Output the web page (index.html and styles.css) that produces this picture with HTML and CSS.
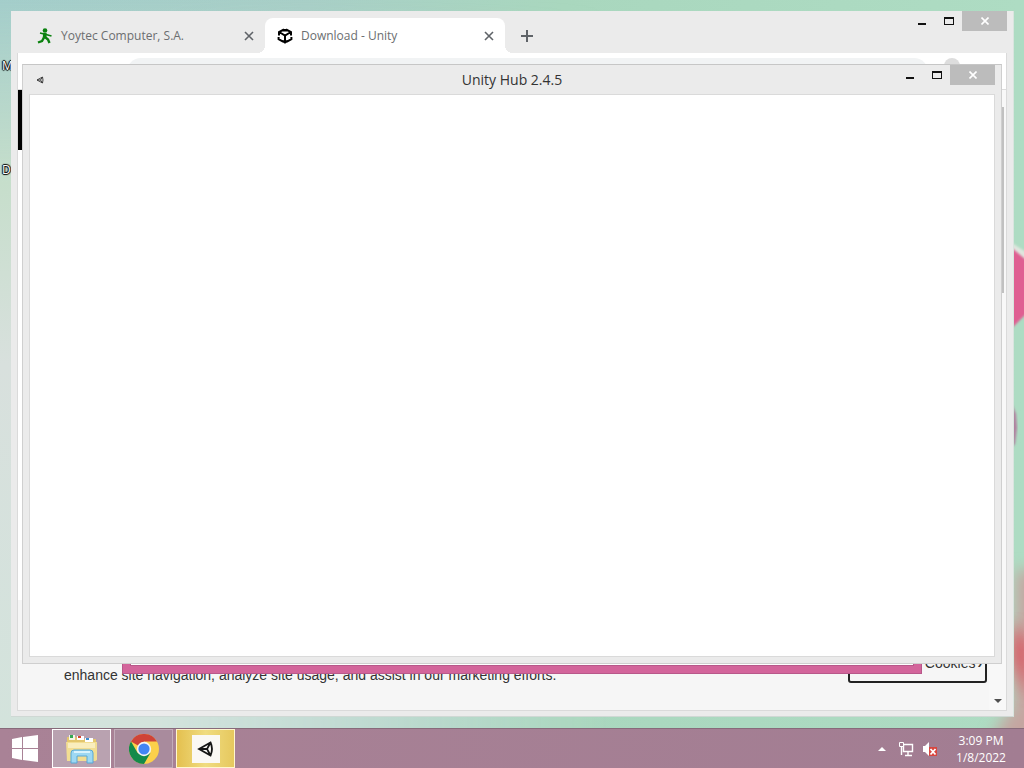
FILE: index.html
```html
<!DOCTYPE html>
<html lang="en">
<head>
<meta charset="utf-8">
<title>Desktop</title>
<link rel="stylesheet" href="styles.css">
</head>
<body>
<div class="desktop">
  <main class="workspace">
    <svg class="petals" width="84" height="728" viewBox="0 0 84 728" aria-hidden="true">
      <defs>
        <filter id="soft"><feGaussianBlur stdDeviation="1"/></filter>
        <filter id="softer" x="-1" width="3"><feGaussianBlur stdDeviation="8"/></filter>
      </defs>
      <path d="M72 243l14 9v8l-14-6z" fill="#dfe6de" filter="url(#soft)"/>
      <path d="M72 248l14 12v54l-14 14z" fill="#df5f92" filter="url(#soft)"/>
      <path d="M72 404l4 10 1 14-2 16-4 4z" fill="#b0809f" filter="url(#soft)"/>
      <path d="M76 570h30v180H54v-16l20-30z" fill="#c5a5a0" filter="url(#softer)"/>
      <path d="M72 620l16 24v56l-16-40z" fill="#dc4f5c" filter="url(#softer)"/>
    </svg>
    <div class="shortcut shortcut-m">M</div>
    <div class="shortcut shortcut-d">D</div>

    <section class="window browser" aria-label="Browser">
      <header class="tabstrip">
        <div class="tab">
          <svg class="favicon" width="16" height="16" viewBox="0 0 16 16" fill="none" stroke="#0b820f"><circle cx="8" cy="2.500" r="2.300" fill="#0b820f" stroke="none"/><path d="M8 5L7.500 10" stroke-width="3.600"/><path d="M3 5L8 6.200L14.500 8" stroke-width="1.700"/><path d="M8 9L11 11.500L12.500 15M7 9.500L5 13L1 14.500" stroke-width="2.400"/></svg>
          <span class="tab-title">Yoytec Computer, S.A.</span>
          <button class="tab-close" aria-label="Close tab"><svg width="10" height="10" viewBox="0 0 10 10"><path d="M1 1l8 8M9 1l-8 8"/></svg></button>
        </div>
        <div class="tab tab-active">
          <svg class="favicon" width="16" height="16" viewBox="0 0 16 16" fill="none" stroke="#000" stroke-width="2"><path d="M7 1.300L2 4.200v3.300M9 1.300l5 2.900v3.300M1.600 9v2.200L6 13.700M14.400 9v2.200L10 13.700M3 4.500L8 7.500l5-3M8 7.500V14M5.500 12.800L8 14.500l2.500-1.700M7 1v2.500M9 1v2.500"/></svg>
          <span class="tab-title">Download - Unity</span>
          <button class="tab-close" aria-label="Close tab"><svg width="10" height="10" viewBox="0 0 10 10"><path d="M1 1l8 8M9 1l-8 8"/></svg></button>
        </div>
        <button class="new-tab" aria-label="New tab"><svg width="12" height="12" viewBox="0 0 12 12"><path d="M6 0v12M0 6h12"/></svg></button>
        <div class="controls">
          <button class="control" aria-label="Minimize"><svg width="10" height="10" viewBox="0 0 10 10"><path d="M1 7h8v2H1z"/></svg></button>
          <button class="control" aria-label="Maximize"><svg width="10" height="10" viewBox="0 0 10 10"><path d="M0 1h10v8H0zM1 3v5h8V3z" fill-rule="evenodd"/></svg></button>
          <button class="control control-close" aria-label="Close"><svg width="8" height="8" viewBox="0 0 8 8"><path d="M0.500 0.500l7 7M7.500 0.500l-7 7"/></svg></button>
        </div>
      </header>
      <div class="browser-client">
        <div class="toolbar"><div class="omnibox"></div><div class="avatar"></div></div>
        <div class="page">
          <div class="page-main">
            <div class="site-header"></div>
            <div class="cookie-banner">
              <p class="cookie-text">enhance site navigation, analyze site usage, and assist in our marketing efforts.</p>
              <button class="cookie-button">Cookies <b>›</b></button>
            </div>
          </div>
          <div class="scrollbar">
            <div class="thumb"></div>
            <svg width="8" height="4" viewBox="0 0 8 4"><path d="M0 0h8L4 4z" fill="#505050"/></svg>
          </div>
        </div>
      </div>
    </section>

    <div class="pink-window"><div class="pink-client"></div></div>

    <section class="window hub" aria-label="Unity Hub">
      <header class="titlebar">
        <svg class="hub-icon" width="8" height="8" viewBox="0 0 8 8"><path d="M1 4l5.500-3q1 3 0 6zM1 4h3.500M6.500 1l-2 3 2 3" fill="none" stroke="#333" stroke-width="0.900"/></svg>
        <h1 class="hub-title">Unity Hub 2.4.5</h1>
        <div class="controls">
          <button class="control" aria-label="Minimize"><svg width="10" height="10" viewBox="0 0 10 10"><path d="M1 7h8v2H1z"/></svg></button>
          <button class="control" aria-label="Maximize"><svg width="10" height="10" viewBox="0 0 10 10"><path d="M0 1h10v8H0zM1 3v5h8V3z" fill-rule="evenodd"/></svg></button>
          <button class="control control-close" aria-label="Close"><svg width="8" height="8" viewBox="0 0 8 8"><path d="M0.500 0.500l7 7M7.500 0.500l-7 7"/></svg></button>
        </div>
      </header>
      <div class="hub-client"></div>
    </section>
  </main>

  <footer class="taskbar">
    <button class="start" aria-label="Start"><svg width="28" height="28" viewBox="0 0 28 28" fill="#fff"><path d="M1 4l10-2v11H1zM12 2l15-2v13H12zM1 14h10v11L1 23zM12 14h15v13l-15-2z"/></svg></button>
    <button class="task task-open" aria-label="File Explorer">
      <svg width="34" height="32" viewBox="0 0 34 32"><path d="M2 4h9l2 2h18v22H2z" fill="#e3c66c"/><path d="M4 2h6v5H4z" fill="#f5f5e8"/><path d="M5 2h3v3H5z" fill="#35a853"/><path d="M12 3h7v4h-7z" fill="#fff"/><path d="M13 3h3v2h-3z" fill="#d8442f"/><path d="M20 5h8v4h-8z" fill="#fff"/><path d="M21 5h3v2h-3z" fill="#3b8fd0"/><path d="M1 9h31v18l-2 1H2z" fill="#f2dd92"/><path d="M3 10h27v5H3z" fill="#f9edbd"/><path d="M6 30V20q0-3 3-3h16q3 0 3 3v10h-6v-7H12v7z" fill="#9dd8f3" stroke="#58a8d4"/><path d="M9 19h16" stroke="#d9f3fd" stroke-width="2"/></svg>
    </button>
    <button class="task" aria-label="Chrome">
      <svg width="30" height="30" viewBox="0 0 30 30"><circle cx="15" cy="15" r="15" fill="#fbd04a"/><path d="M15 15L2 7.500A15 15 0 0 1 28 7.500H15z" fill="#cf4338"/><path d="M2 7.500A15 15 0 0 0 15 30l6.500-11.300L15 22 8.500 18.800z" fill="#138a4a"/><circle cx="15" cy="15" r="7.200" fill="#f4f4f4"/><circle cx="15" cy="15" r="5.600" fill="#4285f4"/></svg>
    </button>
    <button class="task task-active" aria-label="Unity Hub">
      <svg width="28" height="28" viewBox="0 0 28 28"><path d="M0 0h28v28H0z" fill="#faf8f4"/><path d="M7 14L18.500 7.500Q21.500 14 18.500 20.500zM7 14h8M18.500 7.500L15 14l3.500 6.500" fill="none" stroke="#161616" stroke-width="1.800"/></svg>
    </button>
    <div class="tray">
      <button class="tray-button" aria-label="Show hidden icons"><svg width="8" height="4" viewBox="0 0 8 4"><path d="M0 4h8L4 0z" fill="#fff"/></svg></button>
      <button class="tray-button" aria-label="Network"><svg width="16" height="16" viewBox="0 0 16 16"><path d="M5.500 3.500h9v7h-9zM10 11v3M7 14.500h7M3.500 5v9" fill="none" stroke="#fff" stroke-width="1.400"/><path d="M1.500 1.500h4v4h-4z" fill="#a07f91" stroke="#fff"/></svg></button>
      <button class="tray-button" aria-label="Volume muted"><svg width="16" height="16" viewBox="0 0 16 16"><path d="M1 5h2l4-4v14l-4-4H1z" fill="#fff"/><path d="M7 6h8v9H7z" fill="#d8463f"/><path d="M8.500 8l5 5.500M13.500 8l-5 5.500" stroke="#fff" stroke-width="1.800"/></svg></button>
      <div class="clock"><time>3:09 PM</time><time>1/8/2022</time></div>
    </div>
  </footer>
</div>
</body>
</html>
```
FILE: styles.css
```css
* { box-sizing: border-box; }

body {
  margin: 0;
  font-family: "Open Sans", "Noto Sans", sans-serif;
  font-size: 12px;
}

button {
  margin: 0;
  padding: 0;
  border: 0;
  background: none;
  font: inherit;
  display: flex;
  align-items: center;
  justify-content: center;
}

.desktop {
  display: flex;
  flex-direction: column;
  height: 100vh;
  overflow: hidden;
}

.workspace {
  position: relative;
  flex: 1;
  overflow: hidden;
  background: linear-gradient(90deg, #a4cecb 0, #a8cfc7 30%, #a9d7be 55%, #aedcc3 100%);
}

.workspace::before {
  content: "";
  position: absolute;
  inset: 0;
  background: linear-gradient(180deg, transparent 0, #c6decb 25%, #d8e0dd 50%, #d3e3dc 100%);
  mask-image: linear-gradient(90deg, #000 0, #000 15%, transparent 60%);
}

.petals { position: absolute; top: 0; right: 0; }

.shortcut {
  position: absolute;
  left: 2px;
  color: #fff;
  line-height: 16px;
  text-shadow: 1px 0 1px #000, -1px 0 1px #000, 0 1px 1px #000, 0 -1px 1px #000;
}
.shortcut-m { top: 58px; }
.shortcut-d { top: 162px; }

.window {
  position: absolute;
  display: flex;
  flex-direction: column;
  background: #ebebeb;
}

.browser {
  inset: 11px 10px 11px 11px;
  padding: 0 6px 5px;
  border-right: 1px solid #d9e5df;
  border-bottom: 1px solid #cfd8d4;
}

.tabstrip {
  display: flex;
  align-items: flex-end;
  height: 42px;
  flex: none;
}

.tab {
  display: flex;
  align-items: center;
  gap: 8px;
  width: 240px;
  height: 35px;
  padding: 0 10px 0 12px;
  color: #6b6e70;
}
.tab:first-child { margin-left: 8px; }
.tab-active {
  position: relative;
  background: #fff;
  border-radius: 8px 8px 0 0;
}
.tab-active::before,
.tab-active::after {
  content: "";
  position: absolute;
  bottom: 0;
  width: 8px;
  height: 8px;
}
.tab-active::before { right: 100%; background: radial-gradient(circle at 0 0, transparent 8px, #fff 8px); }
.tab-active::after { left: 100%; background: radial-gradient(circle at 100% 0, transparent 8px, #fff 8px); }
.favicon { flex: none; }
.tab-title { flex: 1; white-space: nowrap; }
.tab-close svg, .new-tab svg { fill: none; stroke: #5f6368; stroke-width: 2; }
.tab-close svg { stroke-width: 1.6; }
.tab-close { width: 12px; height: 16px; }
.new-tab { width: 28px; height: 35px; margin-left: 8px; }

.controls { display: flex; align-self: flex-start; margin-left: auto; }
.control { width: 27px; height: 20px; fill: #111; }
.control-close { width: 45px; background: #bcbcbc; fill: none; stroke: #fff; stroke-width: 1.6; }

.browser-client {
  flex: 1;
  display: flex;
  flex-direction: column;
  background: #fff;
  border: 1px solid #dadada;
  border-top: 0;
}

.toolbar {
  display: flex;
  gap: 16px;
  height: 37px;
  padding: 5px 46px 0 109px;
  border-bottom: 1px solid #dcdcdc;
}
.omnibox { flex: 1; height: 28px; border-radius: 14px; background: #f1f3f4; }
.avatar { width: 16px; height: 16px; border-radius: 50%; background: #ddd; }

.page { flex: 1; display: flex; }
.page-main { flex: 1; display: flex; flex-direction: column; justify-content: space-between; }
.site-header { height: 60px; background: #000; }

.cookie-banner {
  display: flex;
  align-items: flex-end;
  justify-content: space-between;
  height: 110px;
  padding: 0 2px 27px 46px;
  background: #f6f6f6;
  font-family: "Liberation Sans", Arial, sans-serif;
  font-size: 14px;
  color: #333;
}
.cookie-text { margin: 0; line-height: 16px; }
.cookie-button {
  width: 139px;
  height: 48px;
  padding: 0 0 10px 72px;
  border: 2px solid #222;
  border-radius: 3px;
  gap: 2px;
  color: #333;
  align-items: flex-end;
  line-height: 16px;
}

.scrollbar {
  width: 17px;
  display: flex;
  flex-direction: column;
  align-items: center;
  justify-content: space-between;
  padding: 17px 0 7px;
  background: #f8f8f8;
}
.thumb { width: 13px; height: 186px; background: #c1c1c1; }

.pink-window {
  position: absolute;
  left: 122px;
  right: 102px;
  top: 120px;
  bottom: 54px;
  padding: 7px;
  background: #d3659b;
  border: 1px solid #b8588a;
}
.pink-client { height: 100%; background: #fff; border: 1px solid #b8588a; }

.hub {
  inset: 64px 22px 64px 22px;
  padding: 0 6px 6px;
  border: 1px solid #cfcfcf;
  border-top-color: #c6c6c6;
}
.titlebar {
  display: grid;
  grid-template-columns: 1fr auto 1fr;
  align-items: center;
  height: 29px;
  flex: none;
}
.hub-icon { margin-left: 7px; }
.hub-title { margin: 0; font-size: 14px; font-weight: 400; line-height: 20px; color: #333; }
.hub-client { flex: 1; background: #fff; border: 1px solid #dadada; }

.taskbar {
  display: flex;
  align-items: stretch;
  gap: 3px;
  height: 40px;
  flex: none;
  background: linear-gradient(90deg, #a98296, #a27d92);
  border-top: 1px solid #876a7a;
}
.start { width: 49px; }
.task {
  width: 59px;
  border: 1px solid #c3adba;
  background: #a98b9d;
}
.task-open { border-color: #fff; background: #b9a2b0; }
.task-active { border-color: #fff6cf; background: linear-gradient(90deg, #e4c04f, #f0dc80 50%, #e6c85e); }

.tray { display: flex; align-items: center; gap: 8px; margin-left: auto; padding-right: 16px; }
.tray-button { height: 16px; min-width: 16px; }
.clock {
  display: flex;
  flex-direction: column;
  align-items: center;
  width: 54px;
  margin-left: 8px;
  color: #fff;
  line-height: 17px;
}
```
